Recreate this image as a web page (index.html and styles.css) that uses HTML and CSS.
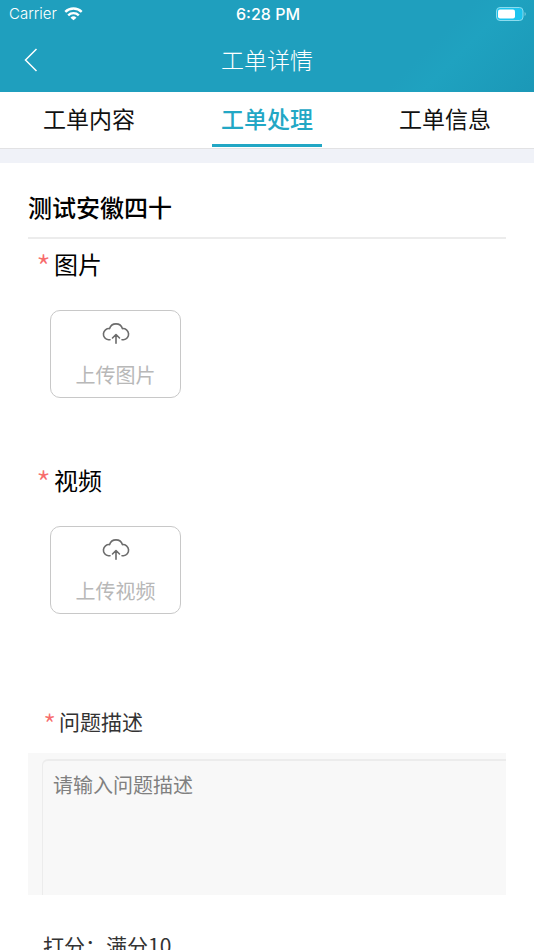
FILE: index.html
```html
<!DOCTYPE html>
<html lang="zh-CN">
<head>
<meta charset="utf-8">
<meta name="viewport" content="width=device-width, initial-scale=1">
<title>工单详情</title>
<link rel="stylesheet" href="styles.css">
</head>
<body>
<div class="app">
  <header class="header">
    <div class="status">
      <div class="carrier">
        <span>Carrier</span>
        <svg class="wifi" viewBox="0 0 20 15" aria-hidden="true">
          <g fill="none" stroke="#fff" stroke-width="2.6">
            <path d="M1.2 5.2a12.6 12.6 0 0 1 17.6 0"/>
            <path d="M4.3 8.9a8.2 8.2 0 0 1 11.4 0"/>
          </g>
          <path d="M10 14.2 6.8 11.4a4.6 4.6 0 0 1 6.4 0z" fill="#fff"/>
        </svg>
      </div>
      <time class="clock">6:28 PM</time>
      <svg class="battery" viewBox="0 0 32 14" aria-hidden="true">
        <rect x="1.500" y=".5" width="26.500" height="13" rx="3.5" fill="#1cc4ee" stroke="#8edcee"/>
        <rect x="3" y="2.500" width="17" height="9" rx="2" fill="#fff"/>
        <path d="M29.500 5v4q1.500-.5 1.500-2t-1.500-2z" fill="#6cc3d8"/>
      </svg>
    </div>
    <div class="navbar">
      <button class="back" type="button" aria-label="返回">
        <svg viewBox="0 0 14 24" aria-hidden="true"><path d="M12.500 1 1.500 12l11 11" fill="none" stroke="#fff" stroke-width="1.500"/></svg>
      </button>
      <h1 class="title">工单详情</h1>
    </div>
  </header>
  <nav class="tabs">
    <a class="tab" href="#content">工单内容</a>
    <a class="tab active" href="#process" aria-current="page">工单处理</a>
    <a class="tab" href="#info">工单信息</a>
  </nav>
  <main class="form" id="process">
    <h2 class="heading">测试安徽四十</h2>
    <section class="upload-field">
      <h3 class="label"><span class="star">*</span>图片</h3>
      <button class="upload" type="button">
        <svg class="cloud" viewBox="0 0 28 22" aria-hidden="true">
          <g fill="none" stroke="#6c6c6c" stroke-width="1.600" stroke-linecap="round" stroke-linejoin="round">
            <path d="M8 17.800H6.500A5.600 5.600 0 1 1 7.600 6.600a6.700 6.700 0 0 1 12.800 0A5.600 5.600 0 1 1 21.500 17.800H20"/>
            <path d="M14 21.200v-8.700M10.500 16 14 12.500l3.500 3.500"/>
          </g>
        </svg>
        <span>上传图片</span>
      </button>
    </section>
    <section class="upload-field">
      <h3 class="label"><span class="star">*</span>视频</h3>
      <button class="upload" type="button">
        <svg class="cloud" viewBox="0 0 28 22" aria-hidden="true">
          <g fill="none" stroke="#6c6c6c" stroke-width="1.600" stroke-linecap="round" stroke-linejoin="round">
            <path d="M8 17.800H6.500A5.600 5.600 0 1 1 7.600 6.600a6.700 6.700 0 0 1 12.800 0A5.600 5.600 0 1 1 21.500 17.800H20"/>
            <path d="M14 21.200v-8.700M10.500 16 14 12.500l3.500 3.500"/>
          </g>
        </svg>
        <span>上传视频</span>
      </button>
    </section>
    <section class="text-field">
      <label class="sublabel" for="desc"><span class="star">*</span>问题描述</label>
      <div class="textbox">
        <textarea id="desc" placeholder="请输入问题描述"></textarea>
      </div>
    </section>
    <p class="sublabel">打分：满分10</p>
  </main>
</div>
</body>
</html>
```
FILE: styles.css
```css
* {
  box-sizing: border-box;
}

body {
  margin: 0;
  background: #fff;
  color: #000;
  font-family: "Noto Sans CJK SC", sans-serif;
}

h1, h2, h3, p {
  margin: 0;
  font-weight: 400;
}

button {
  padding: 0;
  background: none;
  border: 0;
  font-family: inherit;
}

svg {
  display: block;
}

.app {
  height: 100vh;
  overflow: hidden;
}

.header {
  height: 92px;
  color: #fff;
  background: linear-gradient(135deg, #1f9fbe 0%, #1f9fbe 76%, #1fa2c0 82%, #1b98b7 100%);
}

.status {
  display: grid;
  grid-template-columns: 1fr auto 1fr;
  align-items: center;
  height: 27px;
  padding: 0 7px 0 9px;
  font-family: Inter, sans-serif;
  font-size: 15px;
}

.carrier {
  display: flex;
  align-items: center;
  gap: 7px;
  font-weight: 300;
}

.wifi {
  width: 19px;
  height: 14px;
}

.clock {
  font-size: 16px;
  font-weight: 500;
}

.battery {
  justify-self: end;
  width: 32px;
  height: 14px;
}

.navbar {
  display: grid;
  grid-template-columns: 48px 1fr 48px;
  align-items: center;
  height: 66px;
}

.back {
  display: flex;
  justify-content: flex-end;
  height: 48px;
  align-items: center;
  padding-right: 10px;
}

.back svg {
  width: 14px;
  height: 24px;
}

.title {
  padding-bottom: 2px;
  font-size: 23px;
  line-height: 32px;
  font-weight: 200;
  text-align: center;
}

.tabs {
  display: flex;
  height: 57px;
  border-bottom: 1px solid #e2e2e4;
}

.tab {
  display: flex;
  flex: 1;
  flex-direction: column;
  align-items: center;
  padding-top: 10px;
  color: #111;
  font-size: 23px;
  line-height: 32px;
  text-decoration: none;
}

.active {
  color: #22a7c5;
  font-weight: 500;
}

.active::after {
  content: "";
  width: 62%;
  height: 3px;
  margin-top: 10px;
  background: #22a7c5;
}

.form {
  padding: 24px 28px 0;
  border-top: 14px solid #f0f2f8;
}

.heading {
  height: 52px;
  border-bottom: 2px solid #ececec;
  font-size: 24px;
  line-height: 40px;
  font-weight: 500;
}

.upload-field {
  height: 216px;
  padding: 7px 8px 0;
}

.label {
  font-size: 24px;
  line-height: 36px;
}

.star {
  display: inline-block;
  width: 18px;
  color: #f76c6c;
  font-size: 34px;
  font-weight: 300;
  line-height: 20px;
  vertical-align: -7px;
}

.upload {
  display: flex;
  flex-direction: column;
  align-items: center;
  gap: 17px;
  width: 131px;
  height: 88px;
  margin: 28px 0 0 14px;
  padding-top: 11px;
  border: 1px solid #c8c8c8;
  border-radius: 10px;
  color: #b8b8b8;
  font-size: 20px;
  line-height: 28px;
}

.cloud {
  width: 28px;
  height: 22px;
}

.text-field {
  padding-top: 32px;
  margin-bottom: 32px;
}

.sublabel {
  display: block;
  padding-left: 15px;
  color: #333;
  font-size: 21px;
  line-height: 36px;
}

.sublabel .star {
  width: 16px;
  font-size: 30px;
}

.textbox {
  height: 142px;
  margin-top: 14px;
  padding: 6px 0 0 14px;
  background: #f8f8f8;
}

.textbox textarea {
  display: block;
  width: 100%;
  height: 100%;
  padding: 10px;
  resize: none;
  outline: 0;
  background: transparent;
  border: solid #ececec;
  border-width: 2px 0 0 1px;
  border-radius: 6px 0 0 0;
  color: #333;
  font: 20px/28px "Noto Sans CJK SC", sans-serif;
}

.textbox textarea::placeholder {
  color: #808080;
}
```
